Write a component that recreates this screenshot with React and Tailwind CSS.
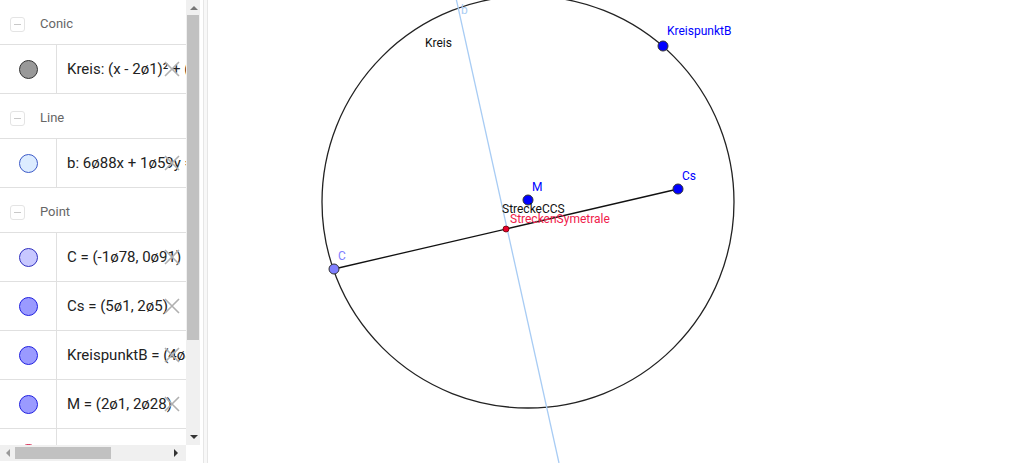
import React from "react";

const XIcon = () => (
  <svg width="18" height="18" viewBox="0 0 18 18" className="absolute right-[5px] top-[15px]">
    <path d="M2 2 L16 16 M16 2 L2 16" stroke="#b0b0b0" strokeWidth="1.6" fill="none" />
  </svg>
);

const Header = ({ label }) => (
  <div className="flex h-[45px] items-center border-b border-[#e0e0e0] pl-[10px] pt-[4px]">
    <div className="flex h-[15px] w-[15px] items-center justify-center rounded-[3px] border border-[#e4e4e4]">
      <div className="h-[1px] w-[7px] bg-[#c8c8c8]" />
    </div>
    <span className="ml-[15px] text-[13px] text-[#666]" style={{ fontFamily: "Roboto, sans-serif" }}>
      {label}
    </span>
  </div>
);

const Item = ({ fill, stroke, text }) => (
  <div className="relative flex h-[49px] border-b border-[#e0e0e0]">
    <div className="flex w-[57px] shrink-0 items-center justify-center border-r border-[#e0e0e0]">
      <div className="h-[19px] w-[19px] rounded-full border" style={{ background: fill, borderColor: stroke }} />
    </div>
    <div
      className="flex items-center whitespace-nowrap pl-[10px] text-[15px] text-[#222]"
      style={{ fontFamily: "Roboto, 'DejaVu Sans', sans-serif" }}
    >
      {text}
    </div>
    <XIcon />
  </div>
);

export default function App() {
  return (
    <div className="flex h-[463px] w-[1024px] overflow-hidden bg-white">
      <div className="flex w-[203px] shrink-0 flex-col">
        <div className="flex min-h-0 flex-1">
          <div className="w-[186px] shrink-0 overflow-hidden">
            <Header label="Conic" />
            <Item fill="#999999" stroke="#333" text="Kreis: (x - 2ø1)² + (y - 2ø28)² = 42ø6" />
            <Header label="Line" />
            <Item fill="#dcecff" stroke="#3c5ac8" text="b: 6ø88x + 1ø59y = 17ø47" />
            <Header label="Point" />
            <Item fill="#c8c8ff" stroke="#3030c0" text="C = (-1ø78, 0ø91)" />
            <Item fill="#9a9aff" stroke="#2020e0" text="Cs = (5ø1, 2ø5)" />
            <Item fill="#9a9aff" stroke="#2020e0" text="KreispunktB = (4ø8, 5ø5)" />
            <Item fill="#9a9aff" stroke="#2020e0" text="M = (2ø1, 2ø28)" />
            <Item fill="#ff8fa8" stroke="#d0204a" text="StreckenSymetrale = (1ø66, 1ø7)" />
          </div>
          <div className="relative w-[14px] shrink-0 bg-[#f0f0f0]">
            <div className="absolute left-[4px] top-[6px] h-0 w-0 border-x-[4px] border-b-[4px] border-x-transparent border-b-[#777]" />
            <div className="absolute left-[1px] top-[15px] h-[325px] w-[12px] bg-[#c1c1c1]" />
            <div className="absolute bottom-[6px] left-[4px] h-0 w-0 border-x-[4px] border-t-[4px] border-x-transparent border-t-[#333]" />
          </div>
        </div>
        <div className="flex h-[16px] shrink-0">
          <div className="relative w-[186px] bg-[#f0f0f0]">
            <div className="absolute left-[6px] top-[4px] h-0 w-0 border-y-[4px] border-r-[4px] border-y-transparent border-r-[#999]" />
            <div className="absolute left-[15px] top-[2px] h-[12px] w-[96px] bg-[#c1c1c1]" />
            <div className="absolute right-[8px] top-[4px] h-0 w-0 border-y-[4px] border-l-[4px] border-y-transparent border-l-[#333]" />
          </div>
          <div className="w-[14px] bg-white" />
        </div>
        <div className="h-[2px] shrink-0" />
      </div>
      <div className="w-[5px] shrink-0 border-x border-[#e6e6e6] bg-[#f8f8f8]" />
      <div className="relative flex-1">
        <svg width="816" height="463" viewBox="208 0 816 463" className="block" style={{ fontFamily: "Roboto, sans-serif" }}>
          <circle cx="528" cy="202" r="206" fill="none" stroke="#222" strokeWidth="1.3" />
          <line x1="456" y1="-2" x2="559" y2="463" stroke="#a8ccf4" strokeWidth="1.3" />
          <text x="461" y="14" fontSize="12" fill="#a8ccf4">b</text>
          <line x1="334" y1="269" x2="678" y2="189" stroke="#111" strokeWidth="1.3" />
          <text x="425" y="47" fontSize="12" fill="#111">Kreis</text>
          <circle cx="663" cy="46" r="5" fill="#0000ff" stroke="#333" strokeWidth="1" />
          <text x="667" y="35" fontSize="12" fill="#0000ff">KreispunktB</text>
          <circle cx="678" cy="189" r="5" fill="#0000ff" stroke="#333" strokeWidth="1" />
          <text x="682" y="180" fontSize="12" fill="#0000ff">Cs</text>
          <circle cx="528" cy="200" r="5" fill="#0000ff" stroke="#333" strokeWidth="1" />
          <text x="532" y="191" fontSize="12" fill="#0000ff">M</text>
          <circle cx="334" cy="269" r="5" fill="#7f7fff" stroke="#333" strokeWidth="1" />
          <text x="338" y="260" fontSize="12" fill="#7f7fff">C</text>
          <text x="502" y="213" fontSize="12" fill="#111">StreckeCCS</text>
          <circle cx="506" cy="229" r="3" fill="#e8002e" stroke="#600" strokeWidth="0.8" />
          <text x="510" y="223" fontSize="12" fill="#f0204a">StreckenSymetrale</text>
        </svg>
      </div>
    </div>
  );
}
